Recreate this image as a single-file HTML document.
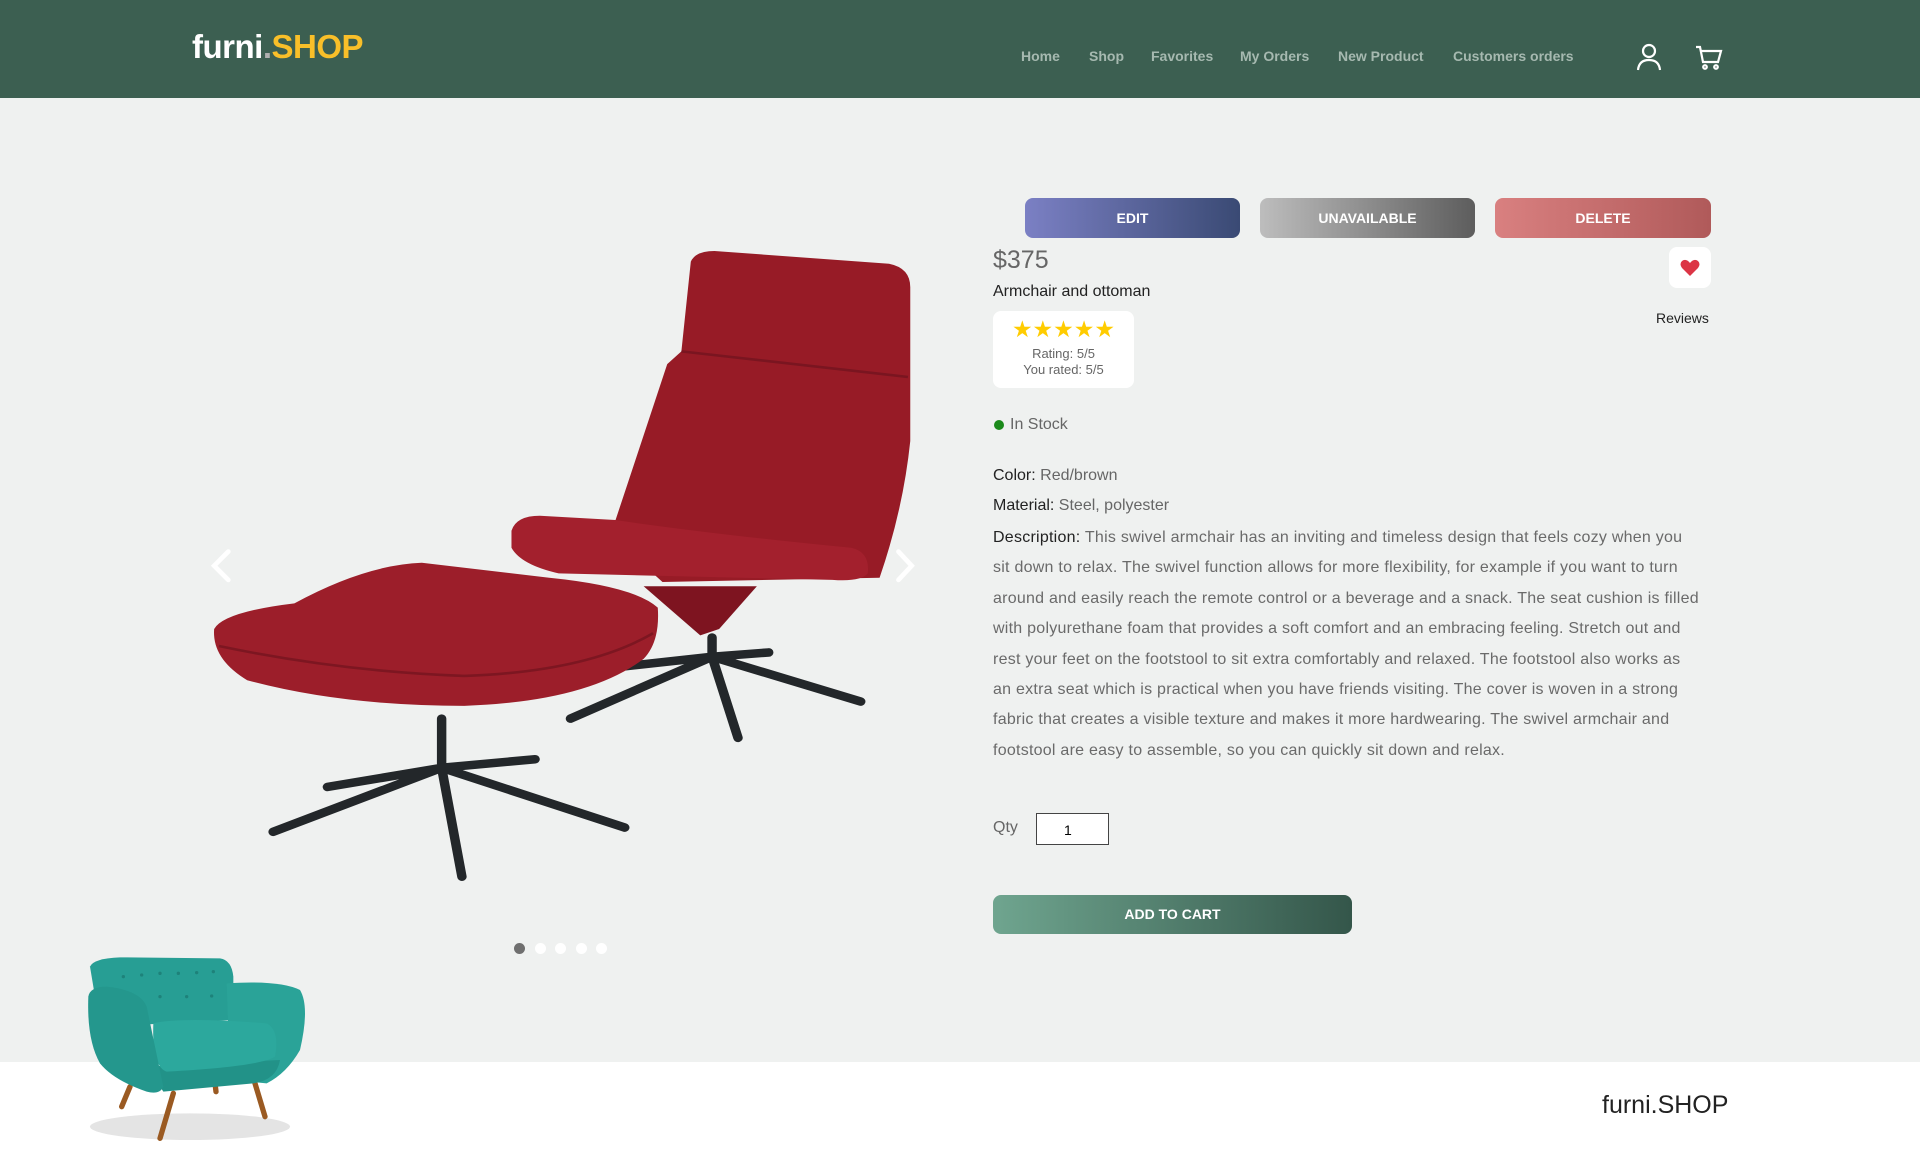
<!DOCTYPE html>
<html><head><meta charset="utf-8"><style>
*{margin:0;padding:0;box-sizing:border-box}
body{width:1920px;height:1153px;background:#eff1f0;font-family:"Liberation Sans",sans-serif;position:relative;overflow:hidden}
.hdr{position:absolute;left:0;top:0;width:1920px;height:98px;background:#3c5f51}
.logo{position:absolute;left:192px;top:28px;font-size:33px;font-weight:bold;color:#fff;letter-spacing:-0.5px}
.logo span{color:#f9bf29}.logo i{font-style:normal;color:#b0b0b0}
.nav{position:absolute;top:48px;font-size:14px;font-weight:bold;color:#a6b9b0}
.abs{position:absolute}
.btn{position:absolute;top:198px;height:40px;width:215px;border-radius:8px;color:#fff;font-weight:bold;font-size:14px;text-align:center;line-height:40px}
.desc{position:absolute;left:993px;top:523px;width:708px;font-size:16px;line-height:30.4px;color:#6a6a6a;letter-spacing:0.25px}
.desc b{font-weight:normal;color:#222}
.foot{position:absolute;left:0;top:1062px;width:1920px;height:91px;background:#fff}
</style></head><body>
<div class="hdr"></div>
<div class="logo">furni<i>.</i><span>SHOP</span></div>
<div class="nav" style="left:1021px">Home</div>
<div class="nav" style="left:1089px">Shop</div>
<div class="nav" style="left:1151px">Favorites</div>
<div class="nav" style="left:1240px">My Orders</div>
<div class="nav" style="left:1338px">New Product</div>
<div class="nav" style="left:1453px">Customers orders</div>
<svg class="abs" style="left:1636px;top:43px" width="26" height="28" viewBox="0 0 26 28" fill="none" stroke="#fff" stroke-width="2.2"><circle cx="13" cy="8" r="6"/><path d="M2 27 Q3 17 13 17 Q23 17 24 27"/></svg>
<svg class="abs" style="left:1695px;top:45px" width="28" height="26" viewBox="0 0 28 26" fill="none" stroke="#fff" stroke-width="2.2"><path d="M1 2 H5 L8 17 H23 L26 6 H6"/><circle cx="10" cy="22" r="1.8"/><circle cx="21" cy="22" r="1.8"/></svg>

<svg class="abs" style="left:200px;top:240px" width="740" height="660" viewBox="0 0 1568 1398">
<g transform="translate(0,23) scale(1,0.905) translate(0,-35)">
<g stroke="#23272a" stroke-width="20" stroke-linecap="round" fill="none">
<path d="M1085 940 L1085 990 M1085 985 L785 1130 M1085 985 L1140 1175 M1085 985 L1400 1090 M1085 985 L1205 975 M1085 985 L880 1010"/>
<path d="M512 1130 L512 1250 M512 1245 L155 1395 M512 1245 L555 1500 M512 1245 L900 1385 M512 1245 L710 1225 M512 1245 L270 1290"/>
</g>
<path d="M940 820 L1180 820 L1100 920 L1060 935 Z" fill="#7e1420"/>
<path d="M1040 60 Q1050 35 1090 35 L1460 65 Q1505 75 1505 120 L1505 480 Q1490 640 1440 800 L980 810 L870 700 Q930 500 990 300 L1020 270 Z" fill="#971b26"/>
<path d="M1020 270 L1500 330" stroke="#7a1520" stroke-width="6" fill="none"/>
<path d="M660 690 Q670 655 720 655 L880 665 Q1100 700 1380 730 Q1420 740 1415 790 Q1400 810 1340 805 L760 790 Q680 770 660 730Z" fill="#a3202d"/>
<path d="M30 920 Q50 880 200 860 Q350 770 470 765 L740 800 Q920 820 970 870 Q975 950 940 990 Q820 1090 560 1100 Q300 1100 100 1040 Q25 990 30 920Z" fill="#9c1e2a"/>
<path d="M40 960 Q300 1020 560 1030 Q820 1020 960 930" stroke="#7d1621" stroke-width="6" fill="none"/>
</g>
<g stroke="#ffffff" stroke-width="10" fill="none" stroke-linecap="round"><path d="M60 660 L30 690 L60 720"/><path d="M1480 660 L1508 690 L1480 720"/></g>
</svg>
<div class="abs" style="left:514px;top:943px;width:11px;height:11px;border-radius:50%;background:#6f6f6f"></div>
<div class="abs" style="left:535px;top:943px;width:11px;height:11px;border-radius:50%;background:#fff"></div>
<div class="abs" style="left:555px;top:943px;width:11px;height:11px;border-radius:50%;background:#fff"></div>
<div class="abs" style="left:576px;top:943px;width:11px;height:11px;border-radius:50%;background:#fff"></div>
<div class="abs" style="left:596px;top:943px;width:11px;height:11px;border-radius:50%;background:#fff"></div>

<div class="btn" style="left:1025px;background:linear-gradient(90deg,#7b80c4,#3a4a74)">EDIT</div>
<div class="btn" style="left:1260px;background:linear-gradient(90deg,#bdbdbd,#5d5d5d)">UNAVAILABLE</div>
<div class="btn" style="left:1495px;width:216px;background:linear-gradient(90deg,#d98080,#b05a5a)">DELETE</div>
<div class="abs" style="left:993px;top:246px;font-size:25px;color:#666">$375</div>
<div class="abs" style="left:993px;top:283px;font-size:16px;color:#222">Armchair and ottoman</div>
<div class="abs" style="left:1669px;top:247px;width:42px;height:41px;background:#fff;border-radius:8px"></div>
<svg class="abs" style="left:1680px;top:259px" width="20" height="18" viewBox="0 0 20 18"><path d="M10 17 L2 9 Q-1 5 2 2 Q6 -1 10 4 Q14 -1 18 2 Q21 5 18 9Z" fill="#dc3545"/></svg>
<div class="abs" style="left:1656px;top:310px;font-size:14px;color:#222">Reviews</div>
<div class="abs" style="left:993px;top:311px;width:141px;height:77px;background:#fff;border-radius:8px;text-align:center">
<div style="color:#ffcc00;font-size:23px;letter-spacing:0px;margin-top:6px;line-height:24px">★★★★★</div>
<div style="font-size:13px;color:#666;line-height:16px;margin-top:5px">Rating: 5/5<br>You rated: 5/5</div></div>
<div class="abs" style="left:994px;top:420px;width:10px;height:10px;border-radius:50%;background:#1b8a1b"></div>
<div class="abs" style="left:1010px;top:416px;font-size:16px;color:#666">In Stock</div>
<div class="abs" style="left:993px;top:467px;font-size:16px;color:#666"><span style="color:#222">Color:</span> Red/brown</div>
<div class="abs" style="left:993px;top:497px;font-size:16px;color:#666"><span style="color:#222">Material:</span> Steel, polyester</div>
<div class="desc"><b>Description:</b> This swivel armchair has an inviting and timeless design that feels cozy when you sit down to relax. The swivel function allows for more flexibility, for example if you want to turn around and easily reach the remote control or a beverage and a snack. The seat cushion is filled with polyurethane foam that provides a soft comfort and an embracing feeling. Stretch out and rest your feet on the footstool to sit extra comfortably and relaxed. The footstool also works as an extra seat which is practical when you have friends visiting. The cover is woven in a strong fabric that creates a visible texture and makes it more hardwearing. The swivel armchair and footstool are easy to assemble, so you can quickly sit down and relax.</div>
<div class="abs" style="left:993px;top:819px;font-size:16px;color:#666">Qty</div>
<div class="abs" style="left:1036px;top:813px;width:73px;height:32px;border:1px solid #444;background:#fff;font-size:14px;padding:8px 0 0 27px">1</div>
<div class="abs" style="left:993px;top:895px;width:359px;height:39px;border-radius:8px;background:linear-gradient(90deg,#6fa58f,#34564a);color:#fff;font-weight:bold;font-size:14px;text-align:center;line-height:39px">ADD TO CART</div>

<div class="foot"></div>
<div class="abs" style="left:1602px;top:1091px;font-size:25px;color:#222">furni.SHOP</div>
<svg class="abs" style="left:80px;top:940px" width="260" height="213" viewBox="0 0 780 639">
<ellipse cx="330" cy="560" rx="300" ry="40" fill="#e4e4e4"/>
<g stroke="#9a5a22" stroke-width="16" stroke-linecap="round"><path d="M150 440 L125 500 M280 460 L240 595 M525 430 L555 530 M405 430 L408 455"/></g>
<path d="M30 80 Q40 55 120 52 L420 55 Q455 60 460 110 L460 240 L60 260 Z" fill="#279e94"/>
<g fill="#1e827a"><circle cx="130" cy="110" r="5"/><circle cx="185" cy="105" r="5"/><circle cx="240" cy="100" r="5"/><circle cx="295" cy="100" r="5"/><circle cx="350" cy="98" r="5"/><circle cx="400" cy="95" r="5"/><circle cx="160" cy="170" r="5"/><circle cx="240" cy="170" r="5"/><circle cx="320" cy="170" r="5"/><circle cx="395" cy="168" r="5"/></g>
<path d="M440 130 Q600 120 660 150 Q690 200 660 330 Q620 400 560 430 L450 420 Z" fill="#2aa398"/>
<path d="M200 380 L600 360 Q590 420 520 430 L250 455Z" fill="#229288"/>
<path d="M220 250 Q300 230 560 250 Q600 270 585 350 Q540 380 260 395 Q215 380 220 250Z" fill="#2ca89d"/>
<path d="M25 170 Q30 140 80 140 Q180 150 200 200 L250 440 Q240 465 200 455 Q100 420 60 370 Q20 300 25 170Z" fill="#24978d"/>
</svg>
</body></html>
